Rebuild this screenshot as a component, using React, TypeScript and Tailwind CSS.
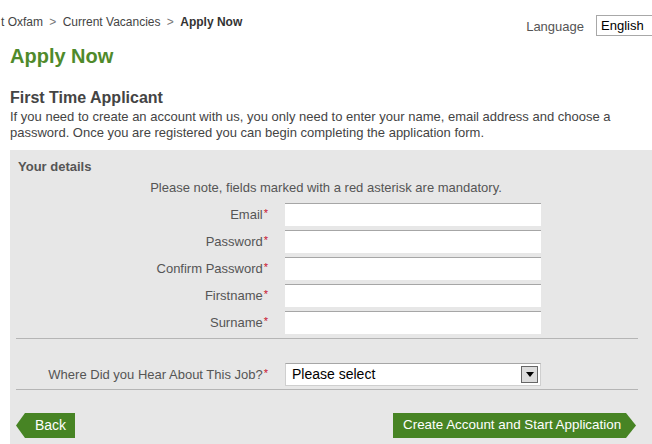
import React from "react";

const fields = ["Email", "Password", "Confirm Password", "Firstname", "Surname"];

const Req = () => <sup className="text-[#c8102e] text-[11px] ml-[1px] relative top-[-2px]">*</sup>;

export default function App() {
  return (
    <div className="w-[652px] h-[444px] overflow-hidden bg-white font-['Liberation_Sans',Arial,sans-serif] text-[#444]">
      {/* top bar */}
      <div className="flex items-start justify-between h-[40px]">
        <div className="pt-[15px] pl-[1px] text-[12px] leading-[14px] text-[#444]">
          t Oxfam <span className="text-[#777] mx-[3px]">&gt;</span> Current Vacancies{" "}
          <span className="text-[#777] mx-[3px]">&gt;</span> <b className="text-[#333]">Apply Now</b>
        </div>
        <div className="flex items-center pt-[15px] mr-[-14px]">
          <span className="text-[13px] text-[#555] mr-[12px] pt-[2px]">Language</span>
          <div className="w-[70px] h-[21px] border border-[#a8a8a8] bg-white text-[13px] leading-[19px] pl-[4px] text-black">
            English
          </div>
        </div>
      </div>

      <div className="pl-[10px]">
        <h1 className="text-[20px] font-bold text-[#4f8a2b] leading-[24px] mt-[4px]">Apply Now</h1>
        <h2 className="text-[16px] font-bold text-[#444] leading-[18px] mt-[21px]">First Time Applicant</h2>
        <p className="text-[13px] leading-[16px] text-[#444] pr-[20px] mt-[2px]">
          If you need to create an account with us, you only need to enter your name, email address and choose a password. Once you are registered you can begin completing the application form.
        </p>

        <div className="mt-[9px] bg-[#e7e7e7] h-[300px] pt-[9px]">
          <div className="pl-[8px] text-[13px] font-bold text-[#555] leading-[16px]">Your details</div>
          <div className="text-center w-[632px] text-[13px] text-[#555] leading-[16px] mt-[5px]">
            Please note, fields marked with a red asterisk are mandatory.
          </div>
          <div className="flex flex-col gap-[4px] mt-[7px]">
            {fields.map((f) => (
              <div key={f} className="flex items-center">
                <label className="w-[260px] text-right text-[13px] text-[#555] pr-[2px]">
                  {f}
                  <Req />
                </label>
                <input className="ml-[15px] w-[256px] h-[23px] bg-white border-t border-t-[#a6a6a6] outline-none" />
              </div>
            ))}
          </div>
          <div className="ml-[6px] mr-[14px] mt-[4px] border-t border-[#b5b5b5]"></div>

          <div className="flex items-center mt-[24px]">
            <label className="w-[260px] text-right text-[13px] text-[#555] pr-[2px]">
              Where Did you Hear About This Job?
              <Req />
            </label>
            <div className="ml-[15px] w-[256px] h-[23px] bg-white border border-[#cfcfcf] border-t-[#a6a6a6] flex items-center justify-between pl-[6px] pr-[2px]">
              <span className="text-[14px] text-black">Please select</span>
              <div className="w-[17px] h-[17px] border border-[#666] bg-[#dcdcdc] flex items-center justify-center">
                <svg width="8" height="5" viewBox="0 0 8 5">
                  <path d="M0 0 L8 0 L4 5 Z" fill="#000" />
                </svg>
              </div>
            </div>
          </div>
          <div className="ml-[6px] mr-[14px] mt-[3px] border-t border-[#b5b5b5]"></div>

          <div className="flex items-center justify-between ml-[6px] mr-[16px] mt-[23px]">
            <button className="h-[25px] w-[59px] bg-[#478424] text-white text-[14px] text-left pl-[19px] [clip-path:polygon(0_50%,9px_0,100%_0,100%_100%,9px_100%)]">
              Back
            </button>
            <button className="h-[25px] w-[243px] bg-[#478424] text-white text-[13.4px] text-left pl-[10px] [clip-path:polygon(0_0,calc(100%-10px)_0,100%_50%,calc(100%-10px)_100%,0_100%)]">
              Create Account and Start Application
            </button>
          </div>
        </div>
      </div>
    </div>
  );
}
